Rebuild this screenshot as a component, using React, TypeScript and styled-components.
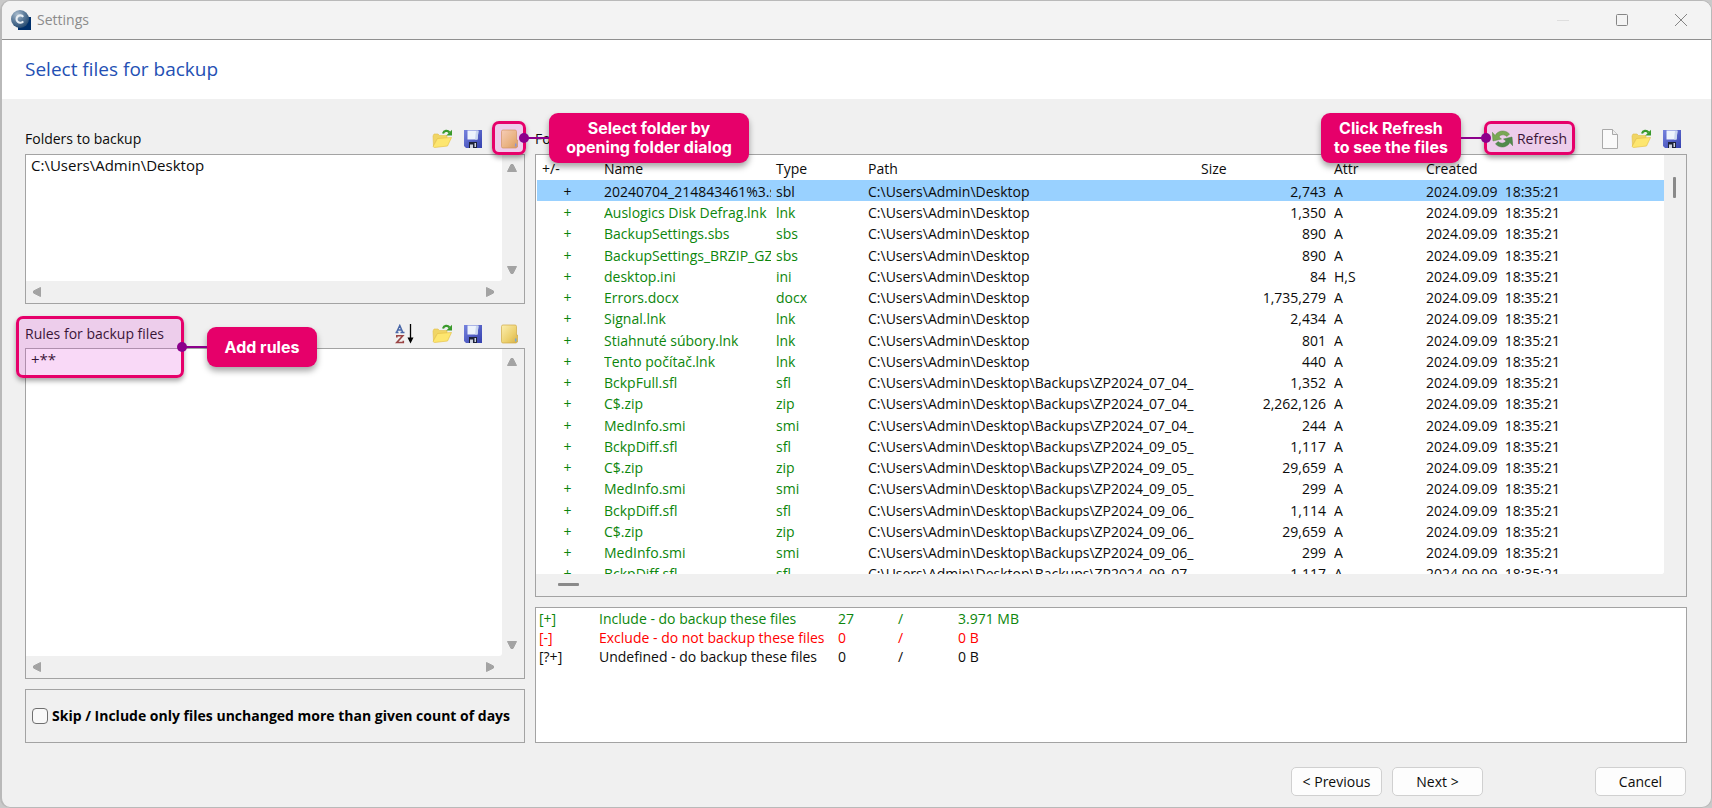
import React from 'react';
import styled, { createGlobalStyle, css } from 'styled-components';

const GlobalStyle = createGlobalStyle`
  *, *::before, *::after { box-sizing: border-box; }
  html, body, #root { height: 100%; }
  body {
    margin: 0;
    background: #c9c9c9;
    color: #0c0c0c;
    font: 14px/20px "Open Sans", "Noto Sans", sans-serif;
  }
  button, input, textarea { font: inherit; color: inherit; }
`;

const Frame = styled.div`
  min-height: 100vh;
  display: flex;
  flex-direction: column;
  border: 1px solid #b9b9b9;
  border-left-width: 2px;
  border-radius: 10px;
  background: #f0f0f0;
  overflow: hidden;
`;

const TitleBar = styled.header`
  height: 39px;
  flex: none;
  display: flex;
  align-items: center;
  gap: 6px;
  padding: 0 1px 0 9px;
  background: #f3f3f3;
  border-bottom: 1px solid #8f8f8f;
  color: #8b8b8b;
`;

const WindowButtons = styled.div`
  margin-left: auto;
  display: flex;
`;

const WindowButton = styled.button<{ $faint?: boolean }>`
  width: 59px;
  height: 38px;
  padding: 0;
  border: 0;
  background: none;
  display: grid;
  place-items: center;
  color: ${(p) => (p.$faint ? '#dedede' : '#858585')};
`;

const Heading = styled.h1`
  flex: none;
  margin: 0;
  height: 59px;
  padding-left: 23px;
  background: #fff;
  color: #2450b4;
  font-size: 19px;
  line-height: 58px;
  font-weight: 400;
`;

const Content = styled.main`
  flex: 1;
  display: grid;
  grid-template-columns: 500px minmax(0, 1fr);
  gap: 10px;
  padding: 25px 24px 0 23px;
`;

const Column = styled.div`
  display: flex;
  flex-direction: column;
  min-width: 0;
`;

const PanelHead = styled.div`
  height: 30px;
  display: flex;
  align-items: center;
  justify-content: space-between;
`;

const Tools = styled.div`
  display: flex;
  align-items: center;
  gap: 11px;
  padding-right: 5px;
`;

const Tool = styled.button<{ $before?: number; $after?: number }>`
  position: relative;
  padding: 0;
  border: 0;
  margin: 0 ${(p) => p.$after ?? 0}px 0 ${(p) => p.$before ?? 0}px;
  background: none;
  display: flex;
  align-items: center;
  gap: 4px;
  height: 20px;
  min-width: 20px;
`;

const box = css`
  border: 1px solid #a3a3a3;
`;

const ListBox = styled.div<{ $height: number }>`
  ${box}
  height: ${(p) => p.$height}px;
  display: grid;
  grid-template: minmax(0, 1fr) 22px / minmax(0, 1fr) 22px;
`;

const ListInput = styled.textarea`
  border: 0;
  outline: 0;
  resize: none;
  overflow: hidden;
  padding: 0 5px;
  background: #fff;
  border-bottom-right-radius: 3px;
  font-size: 15px;
`;

const ScrollTrack = styled.div<{ $horizontal?: boolean }>`
  display: flex;
  flex-direction: ${(p) => (p.$horizontal ? 'row' : 'column')};
  align-items: center;
  justify-content: space-between;
  padding: ${(p) => (p.$horizontal ? '0 7px 0 6px' : '8px 2px 6px 0')};
`;

const RulesHead = styled(PanelHead)`
  height: 29px;
  margin-top: 15px;
`;

const SkipBox = styled.label`
  ${box}
  height: 54px;
  margin-top: 10px;
  padding-left: 6px;
  display: flex;
  align-items: center;
  gap: 4px;
  font-weight: 700;
  color: #000;
  white-space: nowrap;
`;

const Tick = styled.input`
  appearance: none;
  margin: 0;
  width: 16px;
  height: 16px;
  border: 1px solid #6f6f6f;
  border-radius: 4px;
  background: #f8f8f8;
`;

const TableBox = styled.div`
  ${box}
  height: 443px;
  display: grid;
  grid-template: minmax(0, 1fr) 22px / minmax(0, 1fr) 22px;
`;

const TableView = styled.div`
  overflow: hidden;
  padding: 2px 0 0 1px;
  background: #fff;
  border-bottom-right-radius: 3px;
`;

const Table = styled.table`
  width: 100%;
  table-layout: fixed;
  border-collapse: collapse;
`;

const Th = styled.th`
  height: 23px;
  padding: 0;
  text-align: left;
  font-weight: 400;
  &:first-child { padding-left: 5px; }
`;

const Tr = styled.tr<{ $selected?: boolean }>`
  height: 21px;
  background: ${(p) => (p.$selected ? '#99d1ff' : '#fff')};
  --mark: ${(p) => (p.$selected ? '#0c0c0c' : '#0c860c')};
  &:nth-child(4n) { height: 22px; }
`;

const Td = styled.td<{ $mark?: boolean; $tight?: boolean; $align?: 'center' | 'right' }>`
  padding: 2px ${(p) => (p.$tight ? 5 : 8)}px 0 0;
  line-height: 19px;
  white-space: pre;
  overflow: hidden;
  text-align: ${(p) => p.$align ?? 'left'};
  color: ${(p) => (p.$mark ? 'var(--mark)' : 'inherit')};
`;

const Sign = styled(Td)`
  padding-right: 6px;
`;

const Clip = styled.div`
  overflow: hidden;
`;

const Thumb = styled.span<{ $horizontal?: boolean }>`
  width: ${(p) => (p.$horizontal ? 21 : 3)}px;
  height: ${(p) => (p.$horizontal ? 3 : 21)}px;
  background: #8a8a8a;
  border-radius: 1px;
`;

const ThumbTrack = styled.div<{ $horizontal?: boolean }>`
  display: flex;
  align-items: ${(p) => (p.$horizontal ? 'center' : 'flex-start')};
  justify-content: ${(p) => (p.$horizontal ? 'flex-start' : 'center')};
  padding: ${(p) => (p.$horizontal ? '0 0 2px 22px' : '22px 2px 0 0')};
`;

const SummaryBox = styled.div`
  ${box}
  height: 136px;
  margin-top: 10px;
  padding: 1px 3px;
  background: #fff;
`;

const SummaryTable = styled.table`
  table-layout: fixed;
  width: 560px;
  border-collapse: collapse;
`;

const SummaryRow = styled.tr<{ $color: string }>`
  color: ${(p) => p.$color};
  td {
    padding: 0;
    height: 19px;
    line-height: 19px;
    white-space: nowrap;
  }
`;

const Footer = styled.footer`
  flex: none;
  display: flex;
  gap: 10px;
  padding: 24px 25px 11px;
  justify-content: flex-end;
`;

const PushButton = styled.button<{ $apart?: boolean }>`
  width: 91px;
  height: 29px;
  padding: 0;
  margin-left: ${(p) => (p.$apart ? 102 : 0)}px;
  border: 1px solid #d0d0d0;
  border-radius: 5px;
  background: #fdfdfd;
`;

const Anchor = styled.div`
  position: relative;
`;

const Highlight = styled.span<{ $x: number; $y: number; $w: number; $h: number }>`
  position: absolute;
  z-index: 2;
  pointer-events: none;
  left: ${(p) => p.$x}px;
  top: ${(p) => p.$y}px;
  width: ${(p) => p.$w}px;
  height: ${(p) => p.$h}px;
  border: 3px solid #e6006a;
  border-radius: 7px;
  background: rgba(224, 64, 215, 0.2);
  box-shadow: 0 3px 5px rgba(0, 0, 0, 0.35);
`;

const Callout = styled.span<{ $side: 'left' | 'right'; $w: number; $h: number }>`
  position: absolute;
  z-index: 3;
  top: 50%;
  margin-top: -${(p) => p.$h / 2}px;
  ${(p) => (p.$side === 'right' ? 'left' : 'right')}: calc(100% + 26px);
  width: ${(p) => p.$w}px;
  height: ${(p) => p.$h}px;
  display: grid;
  place-items: center;
  border-radius: 9px;
  background: #e6006a;
  color: #fff;
  box-shadow: 0 4px 6px rgba(0, 0, 0, 0.35);
  font: 700 16px/19px Inter, sans-serif;
  text-align: center;
  white-space: pre;
  &::before {
    content: '';
    position: absolute;
    top: calc(50% - 1px);
    ${(p) => (p.$side === 'right' ? 'right' : 'left')}: 100%;
    width: 25px;
    height: 2px;
    background: #8b008b;
  }
  &::after {
    content: '';
    position: absolute;
    top: calc(50% - 5px);
    ${(p) => (p.$side === 'right' ? 'right' : 'left')}: calc(100% + 20px);
    width: 10px;
    height: 10px;
    border-radius: 50%;
    background: #8b008b;
  }
`;

const AppIcon = () => (
  <svg width="20" height="20" viewBox="0 0 20 20" aria-hidden="true">
    <defs>
      <radialGradient id="ball" cx="0.35" cy="0.25" r="0.8">
        <stop offset="0" stopColor="#a9bccd" />
        <stop offset="0.5" stopColor="#5d7c9b" />
        <stop offset="1" stopColor="#24496f" />
      </radialGradient>
    </defs>
    <rect x="7" y="7" width="13" height="13" fill="#00306b" />
    <circle cx="9" cy="9" r="9" fill="url(#ball)" />
    <path d="M12.2 6.9A3.7 3.7 0 1 0 12.2 11.3" fill="none" stroke="#e6edf3" strokeWidth="2.1" />
  </svg>
);

const OpenIcon = () => (
  <svg width="20" height="20" viewBox="0 0 20 20" aria-hidden="true">
    <path d="M1 7l1-2h4l1.500 1.500H15V10H5l-3.500 7z" fill="#f0d565" stroke="#e3c04a" strokeWidth=".6" />
    <path d="M5.500 9.500l14-1-4 8.500-13 1.500-1.500-1z" fill="#fde66f" stroke="#e6c34b" strokeWidth=".7" />
    <path d="M11 4.500C12 1.500 15.500 .8 17.500 3.500" fill="none" stroke="#3a9a2c" strokeWidth="2.200" />
    <path d="M20 .8V6.500h-5.700z" fill="#3a9a2c" />
  </svg>
);

const SaveIcon = () => (
  <svg width="20" height="20" viewBox="0 0 20 20" aria-hidden="true">
    <defs>
      <linearGradient id="disk" x1="0" y1="0" x2="1" y2="1">
        <stop offset="0" stopColor="#7683de" />
        <stop offset="1" stopColor="#3440ae" />
      </linearGradient>
    </defs>
    <path d="M1 1h18v18H3l-2-2z" fill="url(#disk)" />
    <path d="M4.500 1.500h11l-1 9H4.500z" fill="#edf3fc" />
    <path d="M13 2h2.500l-1 8.500H12z" fill="#c9d6f0" />
    <path d="M6 13h8v6H6z" fill="#1d2238" />
    <path d="M7 15.500h3V19H7zM11.500 14H13v4h-1.500z" fill="#cfd4e2" />
  </svg>
);

const FolderIcon = () => (
  <svg width="20" height="20" viewBox="0 0 20 20" aria-hidden="true">
    <defs>
      <linearGradient id="folder" x1="0" y1="0" x2="1" y2="1">
        <stop offset="0" stopColor="#fcefb0" />
        <stop offset="0.6" stopColor="#ecd06d" />
        <stop offset="1" stopColor="#d6b047" />
      </linearGradient>
    </defs>
    <path d="M3 1h12q1.500 0 1.500 1.500V11h1v7l-1.500 1H3Q1.500 19 1.500 17.500v-15Q1.500 1 3 1z" fill="url(#folder)" stroke="#d0aa45" strokeWidth=".7" />
    <path d="M15.700 14.500v3" stroke="#6fa8dc" strokeWidth="1.400" />
  </svg>
);

const SortIcon = () => (
  <svg width="20" height="20" viewBox="0 0 20 20" aria-hidden="true">
    <path d="M.5 8.500h3M5.500 8.500h4M1.700 8L4.800 1.500 7.600 8M3 6h3.500" fill="none" stroke="#4967a8" strokeWidth="1.500" />
    <path d="M1.800 13.500v-1.800h6L1.800 18.500h6.500v-1.800" fill="none" stroke="#9a4545" strokeWidth="1.600" />
    <path d="M15.500 0v15" stroke="#000" strokeWidth="1.300" />
    <path d="M12.500 13.500h6l-3 6z" fill="#000" />
  </svg>
);

const NewIcon = () => (
  <svg width="20" height="20" viewBox="0 0 20 20" aria-hidden="true">
    <path d="M2.500 .5h10l5 5V19.500h-15z" fill="#fafafa" stroke="#a9a9a9" />
    <path d="M12.500 .5v5h5" fill="#eee" stroke="#a9a9a9" />
  </svg>
);

const RefreshIcon = () => (
  <svg width="21" height="20" viewBox="0 0 21 20" aria-hidden="true">
    <path d="M3.200 6.500C5.500 1.500 13 .2 17.500 5l-2.500 2.500C12 5 8.500 5.500 7 8l2.500 2L1 12 .2 3.200z" fill="#5fc234" stroke="#3f9a24" strokeWidth=".5" />
    <path d="M17.800 13.500C15.500 18.500 8 19.800 3.500 15L6 12.500c3 2.500 6.500 2 8-.5L11.500 10 20 8l.8 8.800z" fill="#2f9e2a" stroke="#23801f" strokeWidth=".5" />
  </svg>
);

const Arrow = ({ d }: { d: string }) => (
  <svg width="10" height="10" viewBox="0 0 10 10" aria-hidden="true">
    <path d={d} fill="#a3a3a3" stroke="#a3a3a3" strokeLinejoin="round" />
  </svg>
);

const up = 'M4 1.500h2l3.500 7h-9z';
const down = 'M4 8.500h2l3.500-7h-9z';
const left = 'M1.500 4v2l7 3.500v-9z';
const right = 'M8.500 4v2l-7 3.500v-9z';

const desk = 'C:\\Users\\Admin\\Desktop';
const zip = (day: string) => `${desk}\\Backups\\ZP2024_${day}_`;

const files: [string, string, string, string, string][] = [
  ['20240704_214843461%3.s', 'sbl', desk, '2,743', 'A'],
  ['Auslogics Disk Defrag.lnk', 'lnk', desk, '1,350', 'A'],
  ['BackupSettings.sbs', 'sbs', desk, '890', 'A'],
  ['BackupSettings_BRZIP_GZ', 'sbs', desk, '890', 'A'],
  ['desktop.ini', 'ini', desk, '84', 'H,S'],
  ['Errors.docx', 'docx', desk, '1,735,279', 'A'],
  ['Signal.lnk', 'lnk', desk, '2,434', 'A'],
  ['Stiahnuté súbory.lnk', 'lnk', desk, '801', 'A'],
  ['Tento počítač.lnk', 'lnk', desk, '440', 'A'],
  ['BckpFull.sfl', 'sfl', zip('07_04'), '1,352', 'A'],
  ['C$.zip', 'zip', zip('07_04'), '2,262,126', 'A'],
  ['MedInfo.smi', 'smi', zip('07_04'), '244', 'A'],
  ['BckpDiff.sfl', 'sfl', zip('09_05'), '1,117', 'A'],
  ['C$.zip', 'zip', zip('09_05'), '29,659', 'A'],
  ['MedInfo.smi', 'smi', zip('09_05'), '299', 'A'],
  ['BckpDiff.sfl', 'sfl', zip('09_06'), '1,114', 'A'],
  ['C$.zip', 'zip', zip('09_06'), '29,659', 'A'],
  ['MedInfo.smi', 'smi', zip('09_06'), '299', 'A'],
  ['BckpDiff.sfl', 'sfl', zip('09_07'), '1,117', 'A'],
];

const summary = [
  ['#0c860c', '[+]', 'Include - do backup these files', '27', '3.971 MB'],
  ['#ff0000', '[-]', 'Exclude - do not backup these files', '0', '0 B'],
  ['#0c0c0c', '[?+]', 'Undefined - do backup these files', '0', '0 B'],
];

const ListArea = ({ label, value, height }: { label: string; value: string; height: number }) => (
  <ListBox $height={height}>
    <ListInput aria-label={label} defaultValue={value} spellCheck={false} />
    <ScrollTrack>
      <Arrow d={up} />
      <Arrow d={down} />
    </ScrollTrack>
    <ScrollTrack $horizontal>
      <Arrow d={left} />
      <Arrow d={right} />
    </ScrollTrack>
  </ListBox>
);

export default function App() {
  return (
    <Frame>
      <GlobalStyle />
      <TitleBar>
        <AppIcon />
        <span>Settings</span>
        <WindowButtons>
          <WindowButton $faint aria-label="Minimize">
            <svg width="12" height="12"><path d="M0 6.500h12" stroke="currentColor" /></svg>
          </WindowButton>
          <WindowButton aria-label="Maximize">
            <svg width="12" height="12"><rect x=".5" y=".5" width="11" height="11" rx="1" fill="none" stroke="currentColor" /></svg>
          </WindowButton>
          <WindowButton aria-label="Close">
            <svg width="12" height="12"><path d="M0 0l12 12M12 0L0 12" stroke="currentColor" /></svg>
          </WindowButton>
        </WindowButtons>
      </TitleBar>
      <Heading>Select files for backup</Heading>
      <Content>
        <Column>
          <PanelHead>
            <span>Folders to backup</span>
            <Tools>
              <Tool aria-label="Open list"><OpenIcon /></Tool>
              <Tool aria-label="Save list"><SaveIcon /></Tool>
              <Tool aria-label="Select folder" $before={6}>
                <FolderIcon />
                <Highlight $x={-8} $y={-8} $w={34} $h={34}>
                  <Callout $side="right" $w={200} $h={50}>{'Select folder by\nopening folder dialog'}</Callout>
                </Highlight>
              </Tool>
            </Tools>
          </PanelHead>
          <ListArea label="Folders to backup" value={desk} height={150} />
          <Anchor>
            <RulesHead>
              <span>Rules for backup files</span>
              <Tools>
                <Tool aria-label="Sort rules" $after={6}><SortIcon /></Tool>
                <Tool aria-label="Open rules"><OpenIcon /></Tool>
                <Tool aria-label="Save rules"><SaveIcon /></Tool>
                <Tool aria-label="Add rule folder" $before={6}><FolderIcon /></Tool>
              </Tools>
            </RulesHead>
            <ListArea label="Rules for backup files" value="+**" height={331} />
            <Highlight $x={-9} $y={12} $w={168} $h={62}>
              <Callout $side="right" $w={110} $h={40}>Add rules</Callout>
            </Highlight>
          </Anchor>
          <SkipBox>
            <Tick type="checkbox" />
            Skip / Include only files unchanged more than given count of days
          </SkipBox>
        </Column>
        <Column>
          <PanelHead>
            <span>Fo</span>
            <Tools>
              <Tool $after={22}>
                <RefreshIcon />
                Refresh
                <Highlight $x={-8} $y={-8} $w={91} $h={34}>
                  <Callout $side="left" $w={140} $h={50}>{'Click Refresh\nto see the files'}</Callout>
                </Highlight>
              </Tool>
              <Tool aria-label="New"><NewIcon /></Tool>
              <Tool aria-label="Open"><OpenIcon /></Tool>
              <Tool aria-label="Save"><SaveIcon /></Tool>
            </Tools>
          </PanelHead>
          <TableBox>
            <TableView>
              <Table>
                <colgroup>
                  <col width="67" />
                  <col width="172" />
                  <col width="92" />
                  <col width="333" />
                  <col width="133" />
                  <col width="92" />
                  <col />
                </colgroup>
                <thead>
                  <tr>
                    <Th>+/-</Th>
                    <Th>Name</Th>
                    <Th>Type</Th>
                    <Th>Path</Th>
                    <Th>Size</Th>
                    <Th>Attr</Th>
                    <Th>Created</Th>
                  </tr>
                </thead>
                <tbody>
                  {files.map(([name, type, path, size, attr], i) => (
                    <Tr key={i} $selected={i === 0}>
                      <Sign $mark $align="center">+</Sign>
                      <Td $mark $tight><Clip>{name}</Clip></Td>
                      <Td $mark>{type}</Td>
                      <Td $tight><Clip>{path}</Clip></Td>
                      <Td $align="right">{size}</Td>
                      <Td>{attr}</Td>
                      <Td>{'2024.09.09  18:35:21'}</Td>
                    </Tr>
                  ))}
                </tbody>
              </Table>
            </TableView>
            <ThumbTrack><Thumb /></ThumbTrack>
            <ThumbTrack $horizontal><Thumb $horizontal /></ThumbTrack>
          </TableBox>
          <SummaryBox>
            <SummaryTable>
              <colgroup>
                <col width="60" />
                <col width="239" />
                <col width="60" />
                <col width="60" />
                <col />
              </colgroup>
              <tbody>
                {summary.map(([color, sign, text, count, size]) => (
                  <SummaryRow key={sign} $color={color}>
                    <td>{sign}</td>
                    <td>{text}</td>
                    <td>{count}</td>
                    <td>/</td>
                    <td>{size}</td>
                  </SummaryRow>
                ))}
              </tbody>
            </SummaryTable>
          </SummaryBox>
        </Column>
      </Content>
      <Footer>
        <PushButton>&lt; Previous</PushButton>
        <PushButton>Next &gt;</PushButton>
        <PushButton $apart>Cancel</PushButton>
      </Footer>
    </Frame>
  );
}
